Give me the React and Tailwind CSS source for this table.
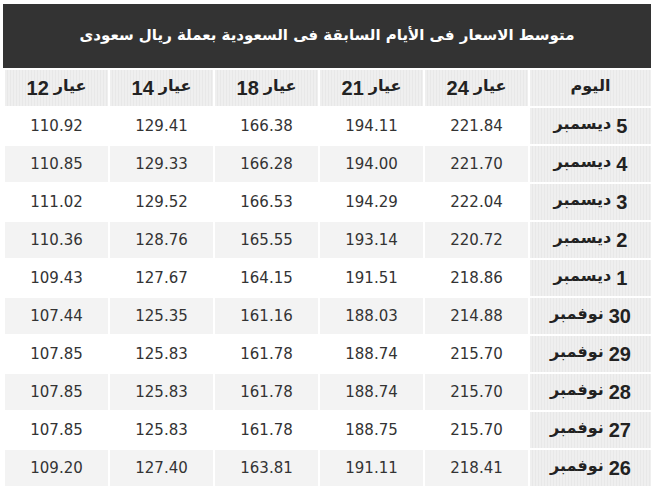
import React from 'react';

const HEADERS = ['اليوم', 'عيار 24', 'عيار 21', 'عيار 18', 'عيار 14', 'عيار 12'];

const ROWS = [
    ['5 ديسمبر', '221.84', '194.11', '166.38', '129.41', '110.92'],
    ['4 ديسمبر', '221.70', '194.00', '166.28', '129.33', '110.85'],
    ['3 ديسمبر', '222.04', '194.29', '166.53', '129.52', '111.02'],
    ['2 ديسمبر', '220.72', '193.14', '165.55', '128.76', '110.36'],
    ['1 ديسمبر', '218.86', '191.51', '164.15', '127.67', '109.43'],
    ['30 نوفمبر', '214.88', '188.03', '161.16', '125.35', '107.44'],
    ['29 نوفمبر', '215.70', '188.74', '161.78', '125.83', '107.85'],
    ['28 نوفمبر', '215.70', '188.74', '161.78', '125.83', '107.85'],
    ['27 نوفمبر', '215.70', '188.75', '161.78', '125.83', '107.85'],
    ['26 نوفمبر', '218.41', '191.11', '163.81', '127.40', '109.20'],
];

const striped = 'bg-[repeating-linear-gradient(90deg,#efefef_0px,#efefef_2px,#e8e8e8_2px,#e8e8e8_3px)]';

// splits "5 ديسمبر" / "عيار 24" so digits and arabic words can be sized apart
function MixedLabel({ text }) {
    return (
        <span className="flex items-center gap-[5px]">
            {text.split(' ').map((part) => (
                /^\d+$/.test(part) ? (
                    <span key={part} className="font-['Liberation_Sans',sans-serif] text-[20px] leading-none">{part}</span>
                ) : (
                    <span key={part} className="relative -top-[2px] font-['DejaVu_Sans',sans-serif] text-[16px] leading-none">{part}</span>
                )
            ))}
        </span>
    );
}

export default function App() {
    return (
        <div className="h-[499px] w-[658px] bg-white pl-[3px] pt-[4px]">
            <div dir="rtl" className="flex h-[64px] w-[648px] items-center justify-center bg-[#333333] pb-[2px] font-['DejaVu_Sans',sans-serif] text-[15px] font-bold text-white">
                متوسط الاسعار فى الأيام السابقة فى السعودية بعملة ريال سعودى
            </div>
            <div dir="rtl" className="mt-[2px] ml-[2px] grid w-[646px] grid-cols-[121px_103px_103px_103px_103px_103px] gap-[2px]">
                {HEADERS.map((header) => (
                    <div key={header} className={`flex h-[36px] items-center justify-center ${striped} font-bold text-[#222]`}>
                        <MixedLabel text={header} />
                    </div>
                ))}
                {ROWS.map((row, rowIndex) => (
                    row.map((cell, cellIndex) => (
                        cellIndex === 0 ? (
                            <div key={`${rowIndex}-${cellIndex}`} className={`flex h-[36px] items-center justify-center ${striped} font-bold text-[#222]`}>
                                <MixedLabel text={cell} />
                            </div>
                        ) : (
                            <div key={`${rowIndex}-${cellIndex}`} className={`flex h-[36px] items-center justify-center font-['DejaVu_Sans',sans-serif] text-[15px] text-[#333] ${rowIndex % 2 === 1 ? 'bg-[#f3f3f3]' : 'bg-white'}`}>
                                {cell}
                            </div>
                        )
                    ))
                ))}
            </div>
        </div>
    );
}
